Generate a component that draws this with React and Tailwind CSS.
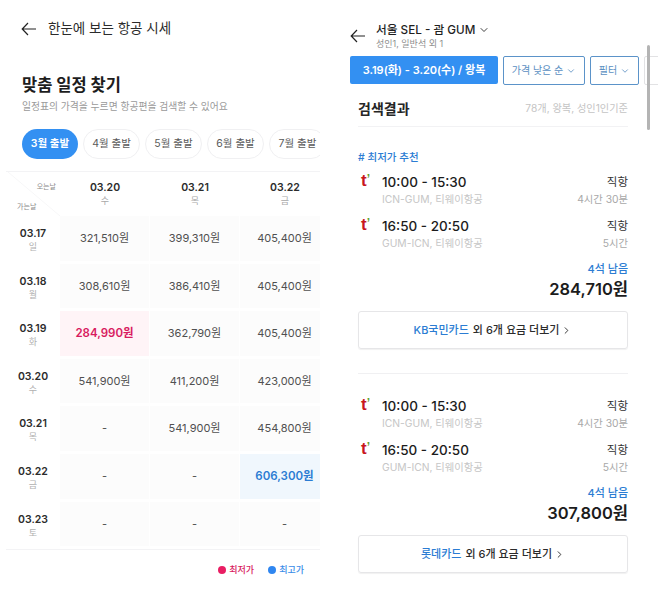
import React from 'react';
import { ChevronDown, ChevronRight } from 'lucide-react';

const FONT = 'font-[Inter,"Noto_Sans_CJK_KR",sans-serif]';

const months = ['3월 출발', '4월 출발', '5월 출발', '6월 출발', '7월 출발'];

const columns = [
  { date: '03.20', day: '수' },
  { date: '03.21', day: '목' },
  { date: '03.22', day: '금' },
];

const rows = [
  { date: '03.17', day: '일', prices: ['321,510원', '399,310원', '405,400원'] },
  { date: '03.18', day: '월', prices: ['308,610원', '386,410원', '405,400원'] },
  { date: '03.19', day: '화', prices: ['284,990원', '362,790원', '405,400원'] },
  { date: '03.20', day: '수', prices: ['541,900원', '411,200원', '423,000원'] },
  { date: '03.21', day: '목', prices: ['-', '541,900원', '454,800원'] },
  { date: '03.22', day: '금', prices: ['-', '-', '606,300원'] },
  { date: '03.23', day: '토', prices: ['-', '-', '-'] },
];

const BackArrow = () => (
  <svg width="16" height="14" viewBox="0 0 16 14" fill="none" stroke="#222" strokeWidth="1.2" className="shrink-0">
    <path d="M15 7H1.2M7 1 1.2 7 7 13" />
  </svg>
);

const priceClass = (price) => {
  if (price === '284,990원') return 'bg-[#fff4f7] text-[#d81b60] font-semibold text-[11.5px]';
  if (price === '606,300원') return 'bg-[#f0f7fd] text-[#2b7cd3] font-semibold text-[11.5px]';
  return 'bg-[#fcfcfc] text-[#505050] text-[11px]';
};

const FareTable = () => (
  <div className="ml-[6px] mt-3 w-[314px] overflow-hidden border-y border-[#f3f3f5]">
    <div className="relative flex h-[44px]">
      {/* corner diagonal */}
      <svg width="54" height="44" viewBox="0 0 54 44" className="absolute top-0 left-0">
        <path d="M2 0 54 44" stroke="#f7f7f8" strokeWidth="1" />
      </svg>
      <div className="relative flex w-[54px] shrink-0 flex-col text-[7px] text-[#8a8a8a]">
        <span className="mt-[10px] pr-[4px] text-right leading-[10px]">오는날</span>
        <span className="mt-[10px] pl-[11px] leading-[10px]">가는날</span>
      </div>
      {columns.map((col) => (
        <div key={col.date} className="w-[90px] shrink-0 pt-[9px] text-center">
          <div className="text-[10.5px] leading-[14px] font-semibold text-[#2c2c2c]">{col.date}</div>
          <div className="text-[9px] leading-[11px] text-[#a8a8a8]">{col.day}</div>
        </div>
      ))}
    </div>
    {rows.map((row) => (
      <div key={row.date} className="flex h-[47.6px]">
        <div className="w-[54px] shrink-0 pt-[11px] text-center">
          <div className="text-[10.5px] leading-[14px] font-semibold text-[#2c2c2c]">{row.date}</div>
          <div className="text-[9px] leading-[12px] text-[#b0b0b0]">{row.day}</div>
        </div>
        {row.prices.map((price, i) => (
          <div
            key={i}
            className={`mb-[3px] flex w-[90px] shrink-0 items-center justify-center border-r-[1.5px] border-white ${priceClass(price)}`}
          >
            {price}
          </div>
        ))}
      </div>
    ))}
  </div>
);

const LeftPanel = () => (
  <div className="h-full w-[330px] shrink-0">
    <div className="flex items-center gap-[11px] pt-[19px] pl-[21px]">
      <BackArrow />
      <span className="text-[13.5px] leading-[19px] text-[#2b2b2b]">한눈에 보는 항공 시세</span>
    </div>
    <h1 className="mt-[34px] pl-[22px] text-[16.5px] leading-[26px] font-bold text-[#1d1d1d]">맞춤 일정 찾기</h1>
    <p className="mt-[1px] pl-[22px] text-[9.8px] leading-[16px] text-[#9a9a9a]">일정표의 가격을 누르면 항공편을 검색할 수 있어요</p>
    <div className="mt-[14px] flex w-[320px] gap-[5px] overflow-hidden pl-[22px]">
      {months.map((month, i) => (
        <span
          key={month}
          className={`flex h-[30px] shrink-0 items-center justify-center rounded-full text-[10.5px] ${
            i === 0 ? 'w-[56px] bg-[#3390f2] font-semibold text-white' : 'w-[57px] border border-[#f0f0f2] text-[#5a5a5a]'
          }`}
        >
          {month}
        </span>
      ))}
    </div>
    <FareTable />
    <div className="mt-[13px] flex justify-end gap-[14px] pr-[26px] text-[9px] leading-[14px] font-medium">
      <span className="flex items-center gap-[3px] text-[#d81b60]">
        <i className="h-2 w-2 rounded-full bg-[#e91e63]" />
        최저가
      </span>
      <span className="flex items-center gap-[3px] text-[#3b8de8]">
        <i className="h-2 w-2 rounded-full bg-[#2f86f0]" />
        최고가
      </span>
    </div>
  </div>
);

const AirlineLogo = () => (
  <span className="w-[24px] shrink-0 pl-[3px] font-['Liberation_Sans',sans-serif] text-[17px] leading-[16px] font-bold text-[#c8171e]">
    t<span className="relative -top-[3px] text-[12px] text-[#5f9e2e]">’</span>
  </span>
);

const Leg = ({ time, route, stop, duration }) => (
  <div className="flex items-start">
    <AirlineLogo />
    <div className="flex-1">
      <div className="text-[13.5px] leading-[18px] font-medium text-[#1c1c1c]">{time}</div>
      <div className="mt-[1px] text-[10.3px] leading-[14px] text-[#c6c6c6]">{route}</div>
    </div>
    <div className="text-right">
      <div className="text-[11.5px] leading-[18px] text-[#333]">{stop}</div>
      <div className="mt-[1px] text-[10.3px] leading-[14px] text-[#a8a8a8]">{duration}</div>
    </div>
  </div>
);

const Offer = ({ price, card }) => (
  <div>
    <div className="flex flex-col gap-[11px]">
      <Leg time="10:00 - 15:30" route="ICN-GUM, 티웨이항공" stop="직항" duration="4시간 30분" />
      <Leg time="16:50 - 20:50" route="GUM-ICN, 티웨이항공" stop="직항" duration="5시간" />
    </div>
    <div className="mt-[11px] text-right text-[11px] leading-[16px] font-medium text-[#2b7cd3]">4석 남음</div>
    <div className="text-right text-[16.5px] leading-[24px] font-semibold text-[#1c1c1c]">{price}</div>
    <button className="mt-[10px] flex h-[38px] w-full items-center justify-center rounded-[3px] border border-[#e6e6e8] text-[11px] font-medium text-[#2b2b2b] shadow-[0_1px_1px_rgba(0,0,0,0.06)]">
      <span className="text-[#2b7cd3]">{card}</span>
      <span className="ml-[4px]">외 6개 요금 더보기</span>
      <ChevronRight size={11} className="ml-[2px]" />
    </button>
  </div>
);

const RightPanel = () => (
  <div className="relative h-full w-[328px] shrink-0 overflow-hidden">
    <div className="flex items-center gap-[10px] pt-[22px] pl-[20px]">
      <BackArrow />
      <div>
        <div className="flex items-center gap-[3px] text-[11.7px] leading-[16px] font-medium text-[#1f1f1f]">
          서울 SEL - 괌 GUM
          <ChevronDown size={12} strokeWidth={1.7} />
        </div>
        <div className="text-[9px] leading-[12px] text-[#8f8f8f]">성인1, 일반석 외 1</div>
      </div>
    </div>
    <div className="mt-[6px] flex gap-[5px] pl-[20px]">
      <div className="flex h-[28px] w-[148px] shrink-0 items-center justify-center rounded-[2px] bg-[#3390f2] text-[11px] font-semibold text-white">
        3.19(화) - 3.20(수) / 왕복
      </div>
      <div className="flex h-[29px] w-[82px] shrink-0 items-center justify-center gap-[3px] rounded-[2px] border border-[#5b93c9] text-[10px] text-[#5b8fc2]">
        가격 낮은 순 <ChevronDown size={10} />
      </div>
      <div className="flex h-[29px] w-[49px] shrink-0 items-center justify-center gap-[3px] rounded-[2px] border border-[#5b93c9] text-[10px] text-[#5b8fc2]">
        필터 <ChevronDown size={10} />
      </div>
      <div className="h-[29px] w-[30px] shrink-0 rounded-[2px] border border-[#e2e2e4]" />
    </div>
    {/* overlay scrollbar */}
    <div className="absolute top-[45px] left-[317px] h-[85px] w-[3px] rounded-full bg-[#b4b4b4]" />
    <div className="mt-[13px] mr-[30px] ml-[28px] flex items-center justify-between border-b border-[#f2f2f4] pb-[6px]">
      <span className="text-[14px] leading-[22px] font-semibold text-[#262626]">검색결과</span>
      <span className="text-[10.2px] text-[#c4c4c4]">78개, 왕복, 성인1인기준</span>
    </div>
    <div className="mt-[23px] ml-[28px] text-[10.5px] leading-[16px] font-medium text-[#2b7cd3]"># 최저가 추천</div>
    <div className="mt-[7px] mr-[30px] ml-[28px]">
      <Offer price="284,710원" card="KB국민카드" />
    </div>
    <div className="mt-[24px] mr-[30px] mb-[23px] ml-[28px] border-t border-[#f0f0f2]" />
    <div className="mr-[30px] ml-[28px]">
      <Offer price="307,800원" card="롯데카드" />
    </div>
  </div>
);

export default function App() {
  return (
    <div className={`flex h-[599px] w-[658px] overflow-hidden bg-white ${FONT}`}>
      <LeftPanel />
      <RightPanel />
    </div>
  );
}
